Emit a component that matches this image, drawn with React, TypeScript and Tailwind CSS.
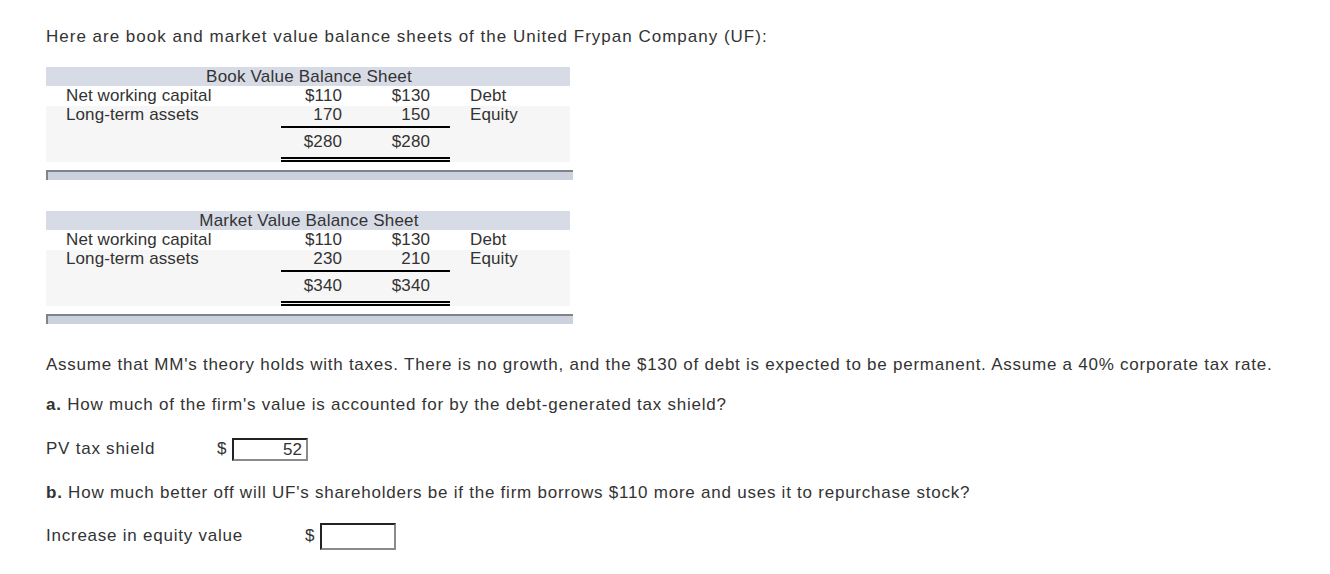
import React from 'react'

interface SheetProps {
  title: string
  nwc: string
  lta: string
  debt: string
  equity: string
  total: string
}

function Sheet({ title, nwc, lta, debt, equity, total }: SheetProps) {
  return (
    <div className="w-[527px]">
      <div className="w-[524px] grid grid-cols-[235px_81px_88px_120px] tracking-[0.1px]">
        <div className="col-span-4 bg-[#d7dbe6] h-[19px] leading-[19px] text-center pl-[2px] tracking-[0.2px]">{title}</div>

        <div className="h-[20px] leading-[20px] pl-5">Net working capital</div>
        <div className="h-[20px] leading-[20px] text-right pr-5">{nwc}</div>
        <div className="h-[20px] leading-[20px] text-right pr-5">{debt}</div>
        <div className="h-[20px] leading-[20px] pl-5">Debt</div>

        <div className="bg-[#f6f6f6] h-[20px] leading-[18px] pl-5">Long-term assets</div>
        <div className="bg-[#f6f6f6] h-[20px] leading-[18px] text-right pr-5">{lta}</div>
        <div className="bg-[#f6f6f6] h-[20px] leading-[18px] text-right pr-5">{equity}</div>
        <div className="bg-[#f6f6f6] h-[20px] leading-[18px] pl-5">Equity</div>

        <div className="bg-[#f6f6f6] h-[36px]"></div>
        <div className="bg-[#f6f6f6] h-[36px] border-t-2 border-b-[5px] border-t-black border-b-black border-double [border-top-style:solid] text-right pr-5 leading-[28px]">{total}</div>
        <div className="bg-[#f6f6f6] h-[36px] border-t-2 border-b-[5px] border-t-black border-b-black border-double [border-top-style:solid] text-right pr-5 leading-[28px]">{total}</div>
        <div className="bg-[#f6f6f6] h-[36px]"></div>
      </div>
      <div className="mt-2 h-[10px] bg-[#cbd2de] border-t-2 border-l-2 border-[#7e838c]"></div>
    </div>
  )
}

export default function App() {
  const sheets = [
    { title: 'Book Value Balance Sheet', nwc: '$110', lta: '170', debt: '$130', equity: '150', total: '$280' },
    { title: 'Market Value Balance Sheet', nwc: '$110', lta: '230', debt: '$130', equity: '210', total: '$340' },
  ]

  return (
    <div className="bg-white min-h-[574px] text-[#333] text-[17px] pl-[46px] pt-[27px]" style={{ fontFamily: '"Liberation Sans", Arial, Helvetica, sans-serif' }}>
      <p className="leading-[20px] tracking-[1px]">Here are book and market value balance sheets of the United Frypan Company (UF):</p>

      <div className="mt-[20px] flex flex-col gap-[31px]">
        {sheets.map(s => (
          <Sheet key={s.title} {...s} />
        ))}
      </div>

      <div className="tracking-[0.76px]">
        <p className="mt-[31px] leading-[20px]">
          Assume that MM's theory holds with taxes. There is no growth, and the $130 of debt is expected to be permanent. Assume a 40% corporate tax rate.
        </p>

        <p className="mt-[20px] leading-[20px]">
          <b>a.</b> How much of the firm's value is accounted for by the debt-generated tax shield?
        </p>

        <div className="mt-[22px] flex items-center h-[24px]">
          <span className="w-[171px]">PV tax shield</span>
          <span className="w-[15px] tracking-normal">$</span>
          <div className="w-[76px] h-[23px] border-2 border-t-[#222] border-l-[#222] border-r-[#8a8a8a] border-b-[#8a8a8a] text-right pr-1 leading-[19px] tracking-normal">52</div>
        </div>

        <p className="mt-[22px] leading-[20px]">
          <b>b.</b> How much better off will UF's shareholders be if the firm borrows $110 more and uses it to repurchase stock?
        </p>

        <div className="mt-[19px] flex items-center h-[28px]">
          <span className="w-[259px]">Increase in equity value</span>
          <span className="w-[15px] tracking-normal">$</span>
          <div className="w-[76px] h-[27px] border-2 border-t-[#222] border-l-[#222] border-r-[#8a8a8a] border-b-[#8a8a8a]"></div>
        </div>
      </div>
    </div>
  )
}
